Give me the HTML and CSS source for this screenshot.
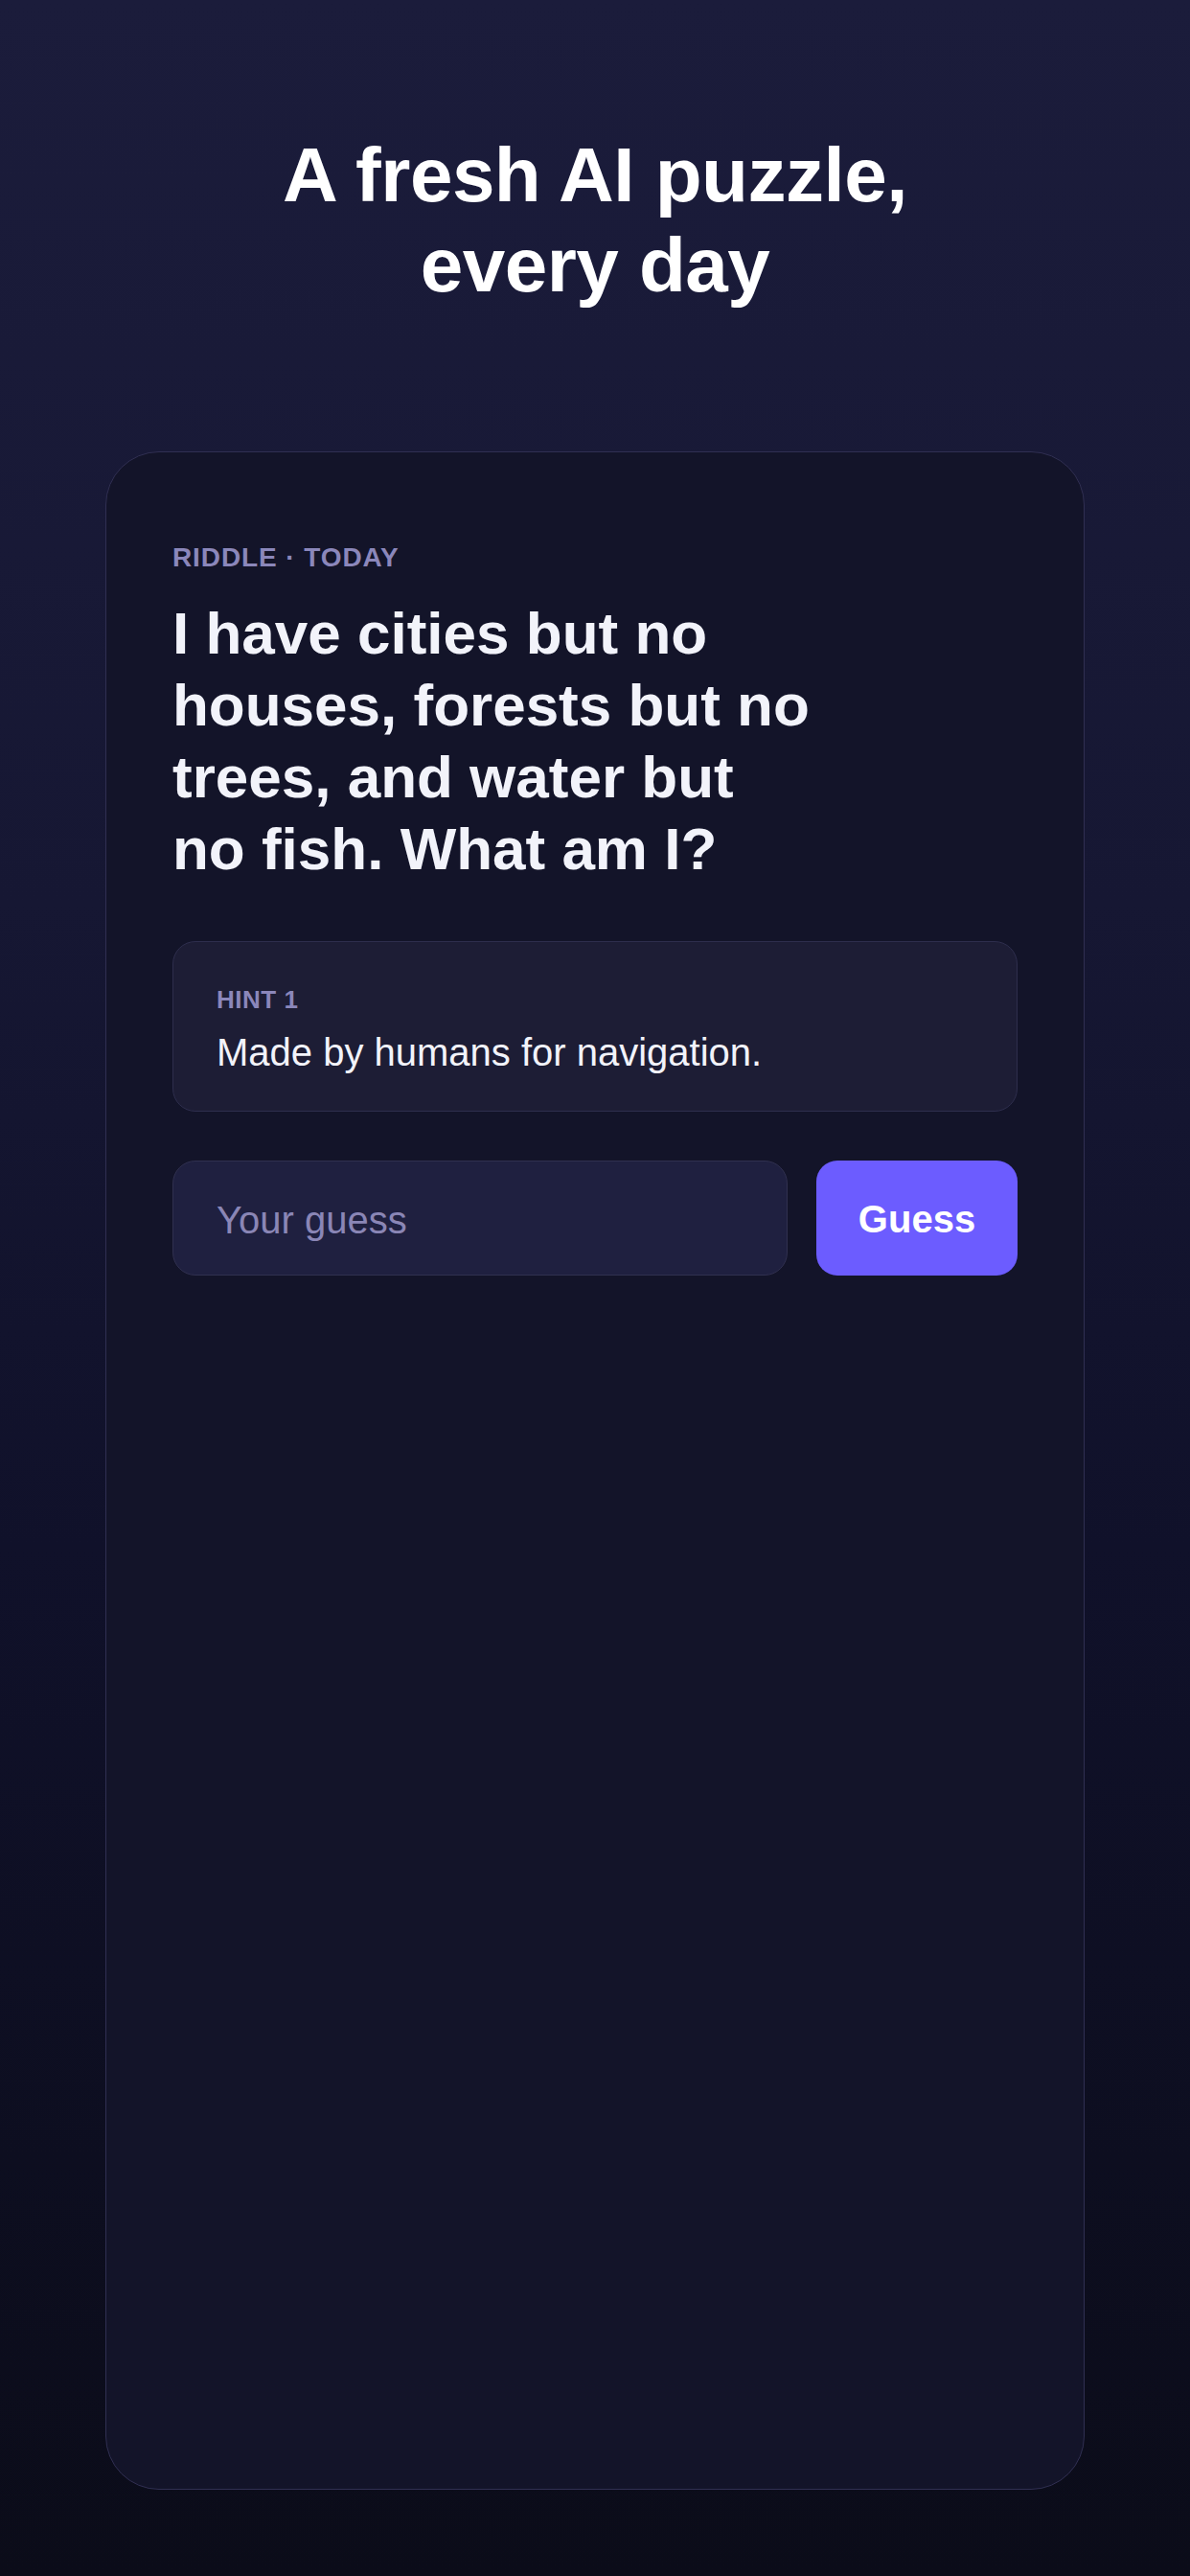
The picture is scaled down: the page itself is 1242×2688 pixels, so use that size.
FILE: index.html
```html
<!DOCTYPE html>
<html lang="en">
<head>
    <meta charset="UTF-8">
    <meta name="viewport" content="width=device-width, initial-scale=1.0">
    <title>Daily Riddle</title>
    <link rel="stylesheet" href="styles.css">
</head>
<body>
<div class="page">
    <h1 class="title">A fresh AI puzzle,<br>every day</h1>

    <div class="card">
        <div class="eyebrow">RIDDLE · TODAY</div>
        <h2 class="question">I have cities but no<br>houses, forests but no<br>trees, and water but<br>no fish. What am I?</h2>

        <div class="hint">
            <div class="hint-label">HINT 1</div>
            <p class="hint-text">Made by humans for navigation.</p>
        </div>

        <form class="guess-row" onsubmit="return false;">
            <input type="text" class="guess-input" placeholder="Your guess">
            <button type="submit" class="guess-btn">Guess</button>
        </form>
    </div>
</div>
</body>
</html>
```

FILE: styles.css
```css
* {
    box-sizing: border-box;
}
body {
    margin: 0;
    padding: 0;
    font-family: "Liberation Sans", Arial, sans-serif;
    background: linear-gradient(180deg, #1b1c3b 0%, #161733 35%, #10112a 60%, #0b0c19 100%);
    color: #f2f3fa;
}
.page {
    min-height: 100vh;
    display: flex;
    flex-direction: column;
    padding: 136px 110px 90px;
}
.title {
    margin: 0 0 147px;
    text-align: center;
    font-size: 80px;
    line-height: 94px;
    font-weight: bold;
    letter-spacing: -0.5px;
    color: #ffffff;
}
.card {
    flex: 1;
    background: #131429;
    border: 1px solid #302f52;
    border-radius: 56px;
    padding: 93px 69px;
}
.eyebrow {
    font-size: 28px;
    line-height: 34px;
    font-weight: bold;
    letter-spacing: 0.9px;
    color: #8b87bb;
}
.question {
    margin: 24px 0 59px;
    font-size: 62px;
    line-height: 75px;
    font-weight: bold;
    color: #f2f3fa;
}
.hint {
    background: #1d1d35;
    border: 1px solid #2e2e4d;
    border-radius: 24px;
    padding: 44px 45px 37px;
}
.hint-label {
    font-size: 26px;
    line-height: 32px;
    font-weight: bold;
    letter-spacing: 0.5px;
    color: #8b87bb;
}
.hint-text {
    margin: 15px 0 0;
    font-size: 40px;
    line-height: 48px;
    color: #f2f3fa;
}
.guess-row {
    display: flex;
    gap: 30px;
    margin-top: 51px;
}
.guess-input {
    flex: 1;
    height: 120px;
    background: #1f2040;
    border: 1px solid #30304f;
    border-radius: 24px;
    padding: 4px 45px 0;
    font-family: inherit;
    font-size: 40px;
    color: #f2f3fa;
    outline: none;
}
.guess-input::placeholder {
    color: #8a86b6;
}
.guess-btn {
    width: 210px;
    height: 120px;
    padding-top: 4px;
    background: #6c5cff;
    border: none;
    border-radius: 22px;
    font-family: inherit;
    font-size: 40px;
    font-weight: bold;
    color: #ffffff;
    cursor: pointer;
}
```
